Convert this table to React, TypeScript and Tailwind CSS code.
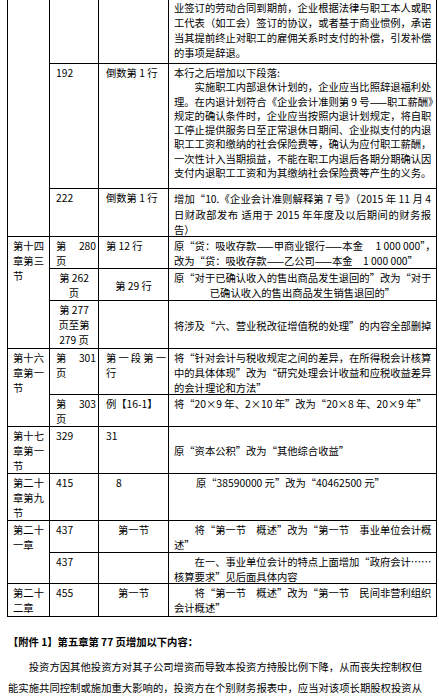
import type { ReactNode } from 'react'

const font = { fontFamily: '"Noto Sans CJK SC", "Noto Sans", sans-serif' }

// justified lines except the last one (unless full is set)
function Lines({ lines, full = false, plain = [] }: { lines: string[]; full?: boolean; plain?: number[] }) {
  return (
    <>
      {lines.map((l, i) => {
        const j = (i < lines.length - 1 || full) && !plain.includes(i)
        return (
          <div key={i} className={'whitespace-nowrap ' + (j ? 'text-justify [text-align-last:justify]' : '')}>
            {l}
          </div>
        )
      })}
    </>
  )
}

function Cell({ children, className = '' }: { children?: ReactNode; className?: string }) {
  return <div className={'border-r border-b border-black px-[5px] pt-[1px] overflow-hidden ' + className}>{children}</div>
}

export default function App() {
  return (
    <div className="w-[439px] h-[697px] bg-white text-black text-[10.3px] leading-[15px] overflow-hidden" style={font}>
      <div className="ml-[7px] w-[430px] border-l border-black grid grid-cols-[42px_49px_70px_268px] grid-rows-[64px_125px_48px_32px_32px_48px_46px_32px_47px_47px_32px_31px_33px]">
        {/* 前一页延续 */}
        <Cell className="row-span-3" />
        <Cell />
        <Cell />
        <Cell className="!pt-0">
          <Lines
            lines={[
              '业签订的劳动合同到期前，企业根据法律与职工本人或职',
              '工代表（如工会）签订的协议，或者基于商业惯例，承诺',
              '当其提前终止对职工的雇佣关系时支付的补偿，引发补偿',
              '的事项是辞退。',
            ]}
          />
        </Cell>

        <Cell className="!pl-[6px]">192</Cell>
        <Cell className="!pl-[7px]">倒数第 1 行</Cell>
        <Cell className="leading-[14.3px] !pt-[2px]">
          <Lines
            full
            plain={[0]}
            lines={[
              '本行之后增加以下段落:',
              '　　实施职工内部退休计划的，企业应当比照辞退福利处',
              '理。在内退计划符合《企业会计准则第 9 号——职工薪酬》',
              '规定的确认条件时，企业应当按照内退计划规定，将自职',
              '工停止提供服务日至正常退休日期间、企业拟支付的内退',
              '职工工资和缴纳的社会保险费等，确认为应付职工薪酬，',
              '一次性计入当期损益，不能在职工内退后各期分期确认因',
              '支付内退职工工资和为其缴纳社会保险费等产生的义务。',
            ]}
          />
        </Cell>

        <Cell className="!pl-[6px]">222</Cell>
        <Cell className="!pl-[7px]">倒数第 1 行</Cell>
        <Cell className="!pt-[2px] leading-[15.5px]">
          <Lines
            lines={[
              '增加“10.《企业会计准则解释第 7 号》（2015 年 11 月 4',
              '日财政部发布 适用于 2015 年年度及以后期间的财务报',
              '告）',
            ]}
          />
        </Cell>

        {/* 第十四章第三节 */}
        <Cell className="row-span-3">
          <Lines lines={['第十四', '章第三', '节']} />
        </Cell>
        <Cell className="!pl-[6px]">
          <Lines lines={['第　 280', '页']} />
        </Cell>
        <Cell className="!pl-[7px]">第 12 行</Cell>
        <Cell>
          <Lines lines={['原“贷：吸收存款——甲商业银行——本金　 1 000 000”，', '改为“贷：吸收存款——乙公司——本金　1 000 000”']} />
        </Cell>

        <Cell className="text-center">
          <div>第 262</div>
          <div>页</div>
        </Cell>
        <Cell className="flex items-center justify-center">第 29 行</Cell>
        <Cell className="text-center">
          <div className="whitespace-nowrap text-justify [text-align-last:justify]">原“对于已确认收入的售出商品发生退回的”改为“对于</div>
          <div className="whitespace-nowrap">已确认收入的售出商品发生销售退回的”</div>
        </Cell>

        <Cell className="text-center">
          <div>第 277</div>
          <div>页至第</div>
          <div>279 页</div>
        </Cell>
        <Cell />
        <Cell className="flex flex-col justify-center">
          <div className="whitespace-nowrap text-justify [text-align-last:justify]">将涉及“六、营业税改征增值税的处理”的内容全部删掉</div>
        </Cell>

        {/* 第十六章第一节 */}
        <Cell className="row-span-2">
          <Lines lines={['第十六', '章第一', '节']} />
        </Cell>
        <Cell className="!pl-[6px]">
          <Lines lines={['第　 301', '页']} />
        </Cell>
        <Cell className="!pl-[7px] !pr-[2px]">
          <Lines lines={['第一段第一', '行']} />
        </Cell>
        <Cell>
          <Lines
            lines={[
              '将“针对会计与税收规定之间的差异，在所得税会计核算',
              '中的具体体现”改为“研究处理会计收益和应税收益差异',
              '的会计理论和方法”',
            ]}
          />
        </Cell>

        <Cell className="!pl-[6px]">
          <Lines lines={['第　 303', '页']} />
        </Cell>
        <Cell className="!pl-[7px]">例【16-1】</Cell>
        <Cell>将“20×9 年、2×10 年”改为“20×8 年、20×9 年”</Cell>

        {/* 第十七章第一节 */}
        <Cell>
          <Lines lines={['第十七', '章第一', '节']} />
        </Cell>
        <Cell className="!pl-[6px]">329</Cell>
        <Cell className="!pl-[7px]">31</Cell>
        <Cell className="flex items-center">原“资本公积”改为“其他综合收益”</Cell>

        {/* 第二十章第九节 */}
        <Cell>
          <Lines lines={['第二十', '章第九', '节']} />
        </Cell>
        <Cell className="!pl-[6px]">415</Cell>
        <Cell className="!pl-[17px]">8</Cell>
        <Cell className="!pl-[27px]">原“38590000 元”改为“40462500 元”</Cell>

        {/* 第二十一章 */}
        <Cell className="row-span-2">
          <Lines lines={['第二十', '一章']} />
        </Cell>
        <Cell className="!pl-[6px]">437</Cell>
        <Cell className="text-center">第一节</Cell>
        <Cell>
          <Lines lines={['　　将“第一节　概述”改为“第一节　事业单位会计概', '述”']} />
        </Cell>

        <Cell className="!pl-[6px]">437</Cell>
        <Cell />
        <Cell>
          <Lines lines={['　　在一、事业单位会计的特点上面增加“政府会计……', '核算要求”见后面具体内容']} />
        </Cell>

        {/* 第二十二章 */}
        <Cell>
          <Lines lines={['第二十', '二章']} />
        </Cell>
        <Cell className="!pl-[6px]">455</Cell>
        <Cell className="text-center">第一节</Cell>
        <Cell>
          <Lines lines={['　　将“第一节　概述”改为“第一节　民间非营利组织', '会计概述”']} />
        </Cell>
      </div>

      {/* 附件 */}
      <div className="ml-[8px] w-[414px] mt-[14px] leading-[21px] font-bold whitespace-nowrap">
        {'【附件 1】第五章第 77 页增加以下内容：'}
      </div>
      <div className="ml-[8px] w-[414px] mt-[4px] leading-[21px] text-[10.35px]">
        <div className="whitespace-nowrap text-justify [text-align-last:justify]">
          {'　　投资方因其他投资方对其子公司增资而导致本投资方持股比例下降，从而丧失控制权但'}
        </div>
        <div className="whitespace-nowrap text-justify [text-align-last:justify]">
          {'能实施共同控制或施加重大影响的，投资方在个别财务报表中，应当对该项长期股权投资从'}
        </div>
      </div>
    </div>
  )
}
